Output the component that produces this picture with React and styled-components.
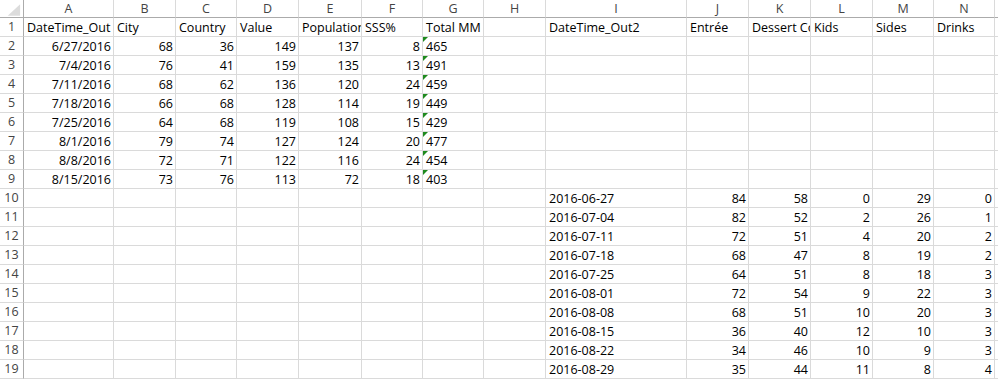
import React from "react";
import styled, { createGlobalStyle } from "styled-components";

const GlobalStyle = createGlobalStyle`
  html, body {
    margin: 0;
    padding: 0;
    background: #fff;
  }
  body {
    font-family: "Open Sans", "Liberation Sans", Arial, sans-serif;
  }
`;

const columns = [
  { name: "A", width: 90 },
  { name: "B", width: 62 },
  { name: "C", width: 61 },
  { name: "D", width: 62 },
  { name: "E", width: 63 },
  { name: "F", width: 61 },
  { name: "G", width: 61 },
  { name: "H", width: 62 },
  { name: "I", width: 141 },
  { name: "J", width: 62 },
  { name: "K", width: 62 },
  { name: "L", width: 62 },
  { name: "M", width: 61 },
  { name: "N", width: 61 },
];

const headers = [
  "DateTime_Out",
  "City",
  "Country",
  "Value",
  "Population",
  "SSS%",
  "Total MM",
  "",
  "DateTime_Out2",
  "Entrée",
  "Dessert Count",
  "Kids",
  "Sides",
  "Drinks",
];

const left = [
  ["6/27/2016", 68, 36, 149, 137, 8, "465"],
  ["7/4/2016", 76, 41, 159, 135, 13, "491"],
  ["7/11/2016", 68, 62, 136, 120, 24, "459"],
  ["7/18/2016", 66, 68, 128, 114, 19, "449"],
  ["7/25/2016", 64, 68, 119, 108, 15, "429"],
  ["8/1/2016", 79, 74, 127, 124, 20, "477"],
  ["8/8/2016", 72, 71, 122, 116, 24, "454"],
  ["8/15/2016", 73, 76, 113, 72, 18, "403"],
];

const right = [
  ["2016-06-27", 84, 58, 0, 29, 0],
  ["2016-07-04", 82, 52, 2, 26, 1],
  ["2016-07-11", 72, 51, 4, 20, 2],
  ["2016-07-18", 68, 47, 8, 19, 2],
  ["2016-07-25", 64, 51, 8, 18, 3],
  ["2016-08-01", 72, 54, 9, 22, 3],
  ["2016-08-08", 68, 51, 10, 20, 3],
  ["2016-08-15", 36, 40, 12, 10, 3],
  ["2016-08-22", 34, 46, 10, 9, 3],
  ["2016-08-29", 35, 44, 11, 8, 4],
];

// build 19 rows x 14 columns of { value, align, flag }
const buildRows = () => {
  const rows = [];
  rows.push(headers.map((h) => ({ value: h, align: "left" })));
  for (let r = 2; r <= 19; r++) {
    const row = columns.map(() => ({ value: "", align: "left" }));
    const l = left[r - 2];
    if (l) {
      row[0] = { value: l[0], align: "right" };
      for (let c = 1; c <= 5; c++) row[c] = { value: l[c], align: "right" };
      row[6] = { value: l[6], align: "left", flag: true };
    }
    const rr = right[r - 10];
    if (rr) {
      row[8] = { value: rr[0], align: "left" };
      for (let c = 1; c <= 5; c++) row[8 + c] = { value: rr[c], align: "right" };
    }
    rows.push(row);
  }
  return rows;
};

const template = `24px ${columns.map((c) => c.width + "px").join(" ")} 1fr`;

const App = () => {
  const rows = buildRows();
  return (
    <>
      <GlobalStyle />
      <Sheet>
        <Corner>
          <svg width="24" height="18" viewBox="0 0 24 18">
            <polygon points="21,4 21,16 8,16" fill="#dcdcdc" />
          </svg>
        </Corner>
        {columns.map((c) => (
          <ColHeader key={c.name}>{c.name}</ColHeader>
        ))}
        <Filler $head />
        {rows.map((row, i) => (
          <React.Fragment key={i}>
            <RowHeader>{i + 1}</RowHeader>
            {row.map((cell, j) => (
              <Cell key={j} $align={cell.align}>
                {cell.flag && <Flag />}
                {cell.value}
              </Cell>
            ))}
            <Filler />
          </React.Fragment>
        ))}
      </Sheet>
    </>
  );
};

export default App;

const Sheet = styled.div`
  display: grid;
  grid-template-columns: ${template};
  grid-template-rows: 18px repeat(19, 19px);
  width: 998px;
  height: 382px;
  overflow: hidden;
  background: #fff;
  font-size: 12.5px;
`;

const Corner = styled.div`
  border-right: 1px solid #ababab;
  border-bottom: 1px solid #ababab;
  box-sizing: border-box;
  display: flex;
`;

const ColHeader = styled.div`
  box-sizing: border-box;
  border-right: 1px solid #dadada;
  border-bottom: 1px solid #ababab;
  color: #444;
  text-align: center;
  line-height: 17px;
`;

const RowHeader = styled.div`
  box-sizing: border-box;
  border-right: 1px solid #ababab;
  border-bottom: 1px solid #dadada;
  color: #444;
  text-align: center;
  line-height: 18px;
`;

const Cell = styled.div`
  position: relative;
  box-sizing: border-box;
  border-right: 1px solid #dadada;
  border-bottom: 1px solid #dadada;
  color: #000;
  line-height: 19px;
  white-space: nowrap;
  overflow: hidden;
  text-align: ${(p) => p.$align};
  padding: ${(p) => (p.$align === "right" ? "0 2px 0 0" : "0 0 0 3px")};
`;

const Flag = styled.span`
  position: absolute;
  top: 0;
  left: 0;
  width: 0;
  height: 0;
  border-top: 5px solid #1e8a1e;
  border-right: 5px solid transparent;
`;

const Filler = styled.div`
  box-sizing: border-box;
  border-bottom: 1px solid ${(p) => (p.$head ? "#ababab" : "#dadada")};
`;
